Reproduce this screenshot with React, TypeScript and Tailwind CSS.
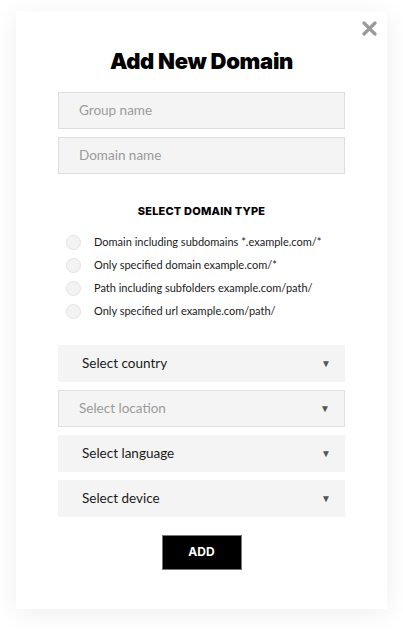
import { useState } from "react";

const domainTypes = [
  "Domain including subdomains *.example.com/*",
  "Only specified domain example.com/*",
  "Path including subfolders example.com/path/",
  "Only specified url example.com/path/",
];

function SelectBox({ label, muted }: { label: string; muted?: boolean }) {
  return (
    <div
      className={
        "flex h-[37px] items-center justify-between bg-[#f4f4f4] pr-[14px] " +
        (muted ? "border border-[#e0e0e0] pl-[20px] text-[#9b9b9b]" : "pl-[24px] text-[#1a1a1a]")
      }
    >
      <span className="text-[13.5px]">{label}</span>
      <span className="text-[10px] text-[#555]">▼</span>
    </div>
  );
}

export default function App() {
  const [picked, setPicked] = useState(-1);
  return (
    <div className="min-h-screen bg-white pt-[11px] font-['Lato',sans-serif]">
      <div className="relative mx-[16px] h-[598px] bg-white shadow-[0_4px_24px_rgba(0,0,0,0.07)]">
        <button className="absolute right-[10px] top-[10px] text-[#9a9a9a]">
          <svg width="15" height="15" viewBox="0 0 15 15">
            <path d="M2 2 L13 13 M13 2 L2 13" stroke="currentColor" strokeWidth="3.2" strokeLinecap="round" />
          </svg>
        </button>

        <div className="flex flex-col px-[42px] pt-[36px]">
          <h1 className="text-center font-['Inter',sans-serif] text-[22px] font-black leading-[28px] tracking-[-0.3px] text-black">
            Add New Domain
          </h1>

          <div className="mt-[17px] flex flex-col gap-[8px]">
            <div className="flex h-[37px] items-center border border-[#dedede] bg-[#f4f4f4] pl-[20px] text-[13.5px] text-[#9b9b9b]">
              Group name
            </div>
            <div className="flex h-[37px] items-center border border-[#dedede] bg-[#f4f4f4] pl-[20px] text-[13.5px] text-[#9b9b9b]">
              Domain name
            </div>
          </div>

          <div className="mt-[29px] text-center font-['Inter',sans-serif] text-[11px] font-extrabold tracking-[0.2px] text-black">
            SELECT DOMAIN TYPE
          </div>

          <div className="mt-[15px] flex flex-col gap-[7px] pl-[8px]">
            {domainTypes.map((t, i) => (
              <div key={t} className="flex h-[16px] items-center gap-[13px]" onClick={() => setPicked(i)}>
                <span
                  className={
                    "h-[15px] w-[15px] rounded-full border border-[#e3e3e3] " +
                    (picked === i ? "bg-black" : "bg-[#f3f3f3]")
                  }
                />
                <span className="text-[11px] text-[#1a1a1a]">{t}</span>
              </div>
            ))}
          </div>

          <div className="mt-[25px] flex flex-col gap-[8px]">
            <SelectBox label="Select country" />
            <SelectBox label="Select location" muted />
            <SelectBox label="Select language" />
            <SelectBox label="Select device" />
          </div>

          <div className="mt-[18px] flex justify-center">
            <button className="h-[35px] w-[80px] border border-[#777] bg-black font-['Inter',sans-serif] text-[12px] font-bold text-white">
              ADD
            </button>
          </div>
        </div>
      </div>
    </div>
  );
}
